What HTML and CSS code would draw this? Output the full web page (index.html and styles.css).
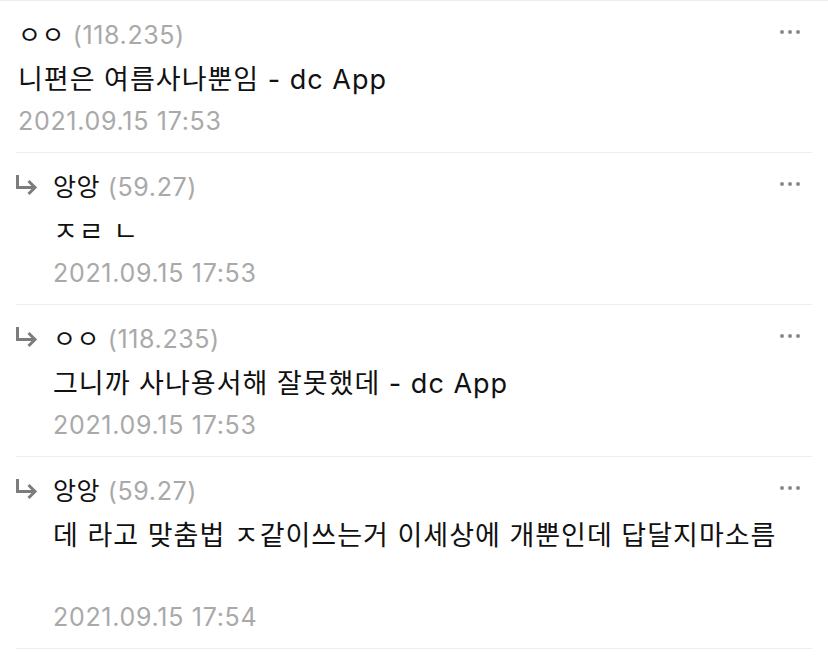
FILE: index.html
```html
<!DOCTYPE html>
<html lang="ko">
<head>
  <meta charset="UTF-8"/>
  <title>댓글</title>
  <meta name="viewport" content="width=device-width, initial-scale=1.0"/>
  <link rel="stylesheet" href="styles.css">
</head>
<body>
  <ul class="comments">
    <!-- 원댓글 -->
    <li class="comment">
      <div class="main">
        <div class="head"><span class="nick">ㅇㅇ</span> <span class="ip">(118.235)</span></div>
        <p class="text">니편은 여름사나뿐임 - dc App</p>
        <div class="date">2021.09.15 17:53</div>
      </div>
      <button class="more" aria-label="더보기">
        <svg width="20" height="4" viewBox="0 0 20 4"><circle cx="2" cy="2" r="2"/><circle cx="10" cy="2" r="2"/><circle cx="18" cy="2" r="2"/></svg>
      </button>
    </li>

    <!-- 답글 -->
    <li class="comment reply">
      <svg class="arrow" width="22" height="21" viewBox="0 0 22 21"><path d="M1.5 0V12.5H17"/><path d="M12.5 6L19 12.5L12.5 19"/></svg>
      <div class="main">
        <div class="head"><span class="nick">앙앙</span> <span class="ip">(59.27)</span></div>
        <p class="text">ㅈㄹ ㄴ</p>
        <div class="date">2021.09.15 17:53</div>
      </div>
      <button class="more" aria-label="더보기">
        <svg width="20" height="4" viewBox="0 0 20 4"><circle cx="2" cy="2" r="2"/><circle cx="10" cy="2" r="2"/><circle cx="18" cy="2" r="2"/></svg>
      </button>
    </li>

    <li class="comment reply">
      <svg class="arrow" width="22" height="21" viewBox="0 0 22 21"><path d="M1.5 0V12.5H17"/><path d="M12.5 6L19 12.5L12.5 19"/></svg>
      <div class="main">
        <div class="head"><span class="nick">ㅇㅇ</span> <span class="ip">(118.235)</span></div>
        <p class="text">그니까 사나용서해 잘못했데 - dc App</p>
        <div class="date">2021.09.15 17:53</div>
      </div>
      <button class="more" aria-label="더보기">
        <svg width="20" height="4" viewBox="0 0 20 4"><circle cx="2" cy="2" r="2"/><circle cx="10" cy="2" r="2"/><circle cx="18" cy="2" r="2"/></svg>
      </button>
    </li>

    <li class="comment reply">
      <svg class="arrow" width="22" height="21" viewBox="0 0 22 21"><path d="M1.5 0V12.5H17"/><path d="M12.5 6L19 12.5L12.5 19"/></svg>
      <div class="main">
        <div class="head"><span class="nick">앙앙</span> <span class="ip">(59.27)</span></div>
        <p class="text">데 라고 맞춤법 ㅈ같이쓰는거 이세상에 개뿐인데 답달지마소름<br><br></p>
        <div class="date">2021.09.15 17:54</div>
      </div>
      <button class="more" aria-label="더보기">
        <svg width="20" height="4" viewBox="0 0 20 4"><circle cx="2" cy="2" r="2"/><circle cx="10" cy="2" r="2"/><circle cx="18" cy="2" r="2"/></svg>
      </button>
    </li>
  </ul>
</body>
</html>
```

FILE: styles.css
```css
body {
  margin: 0;
  background: #fff;
  font-family: Inter, "Noto Sans CJK KR", sans-serif;
  color: #111;
}
.comments {
  list-style: none;
  margin: 0;
  padding: 0;
  border-top: 1px solid #ececec;
}
.comment {
  display: flex;
  align-items: flex-start;
  margin: 0 16px;
  padding: 17px 12px 10px 2px;
  border-bottom: 1px solid #efefef;
}
.reply {
  padding-left: 0;
}
.arrow {
  flex: none;
  margin: 5px 15px 0 0;
  fill: none;
  stroke: #7c7c7c;
  stroke-width: 3;
}
.main {
  flex: 1;
  min-width: 0;
}
.head {
  font-size: 25px;
  line-height: 34px;
  letter-spacing: 0.6px;
}
.ip {
  color: #a9a9a9;
}
.text {
  margin: 8px 0 0;
  font-size: 27px;
  line-height: 40px;
  letter-spacing: 1px;
  white-space: nowrap;
}
.date {
  font-size: 25px;
  line-height: 42px;
  letter-spacing: 0.7px;
  color: #a9a9a9;
}
.more {
  flex: none;
  margin-top: 12px;
  padding: 0;
  border: none;
  background: none;
  line-height: 0;
  fill: #8a8a8a;
  cursor: pointer;
}
```
